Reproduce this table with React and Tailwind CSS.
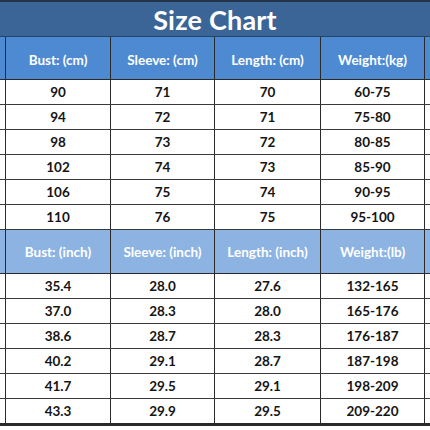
const cmRows = [
  ["90", "71", "70", "60-75"],
  ["94", "72", "71", "75-80"],
  ["98", "73", "72", "80-85"],
  ["102", "74", "73", "85-90"],
  ["106", "75", "74", "90-95"],
  ["110", "76", "75", "95-100"],
];

const inchRows = [
  ["35.4", "28.0", "27.6", "132-165"],
  ["37.0", "28.3", "28.0", "165-176"],
  ["38.6", "28.7", "28.3", "176-187"],
  ["40.2", "29.1", "28.7", "187-198"],
  ["41.7", "29.5", "29.1", "198-209"],
  ["43.3", "29.9", "29.5", "209-220"],
];

const cols = "grid grid-cols-[6px_105px_104px_106px_104px_1fr]";

const Row = ({ cells, className, cellClass }) => (
  <div className={`${cols} ${className}`}>
    <div className="border-r border-[#2a2a2a]" />
    {cells.map((c, i) => (
      <div
        key={i}
        className={`flex items-center justify-center border-r border-[#2a2a2a] ${cellClass}`}
      >
        {c}
      </div>
    ))}
    <div />
  </div>
);

export default function App() {
  return (
    <div
      className="w-[430px] h-[430px] bg-white overflow-hidden"
      style={{ fontFamily: "Lato, 'Open Sans', sans-serif" }}
    >
      {/* Title */}
      <div className="h-[37px] bg-[#3b6497] border-t-2 border-[#26334a] border-b border-b-[#24466e] flex items-center justify-center">
        <span className="text-white font-bold text-[27px] leading-none tracking-[0.2px]">
          Size Chart
        </span>
      </div>

      {/* cm table */}
      <Row
        cells={["Bust: (cm)", "Sleeve: (cm)", "Length: (cm)", "Weight:(kg)"]}
        className="h-[43px] bg-[#4e8ad2] border-b border-[#2a2a2a]"
        cellClass="text-white font-bold text-[13.5px] pt-[4px]"
      />
      {cmRows.map((r, i) => (
        <Row
          key={i}
          cells={r}
          className="h-[25px] border-b border-[#3a3a3a]"
          cellClass="text-[#151515] font-bold text-[13.5px]"
        />
      ))}

      {/* inch table */}
      <Row
        cells={["Bust: (inch)", "Sleeve: (inch)", "Length: (inch)", "Weight:(lb)"]}
        className="h-[44px] bg-[#8db3e2] border-b border-[#2a2a2a]"
        cellClass="text-white font-bold text-[13.5px] pt-[1px]"
      />
      {inchRows.map((r, i) => (
        <Row
          key={i}
          cells={r}
          className={
            i === inchRows.length - 1
              ? "h-[27px] border-b-[3px] border-[#2a2a2a]"
              : "h-[25px] border-b border-[#3a3a3a]"
          }
          cellClass="text-[#151515] font-bold text-[13.5px]"
        />
      ))}
    </div>
  );
}
